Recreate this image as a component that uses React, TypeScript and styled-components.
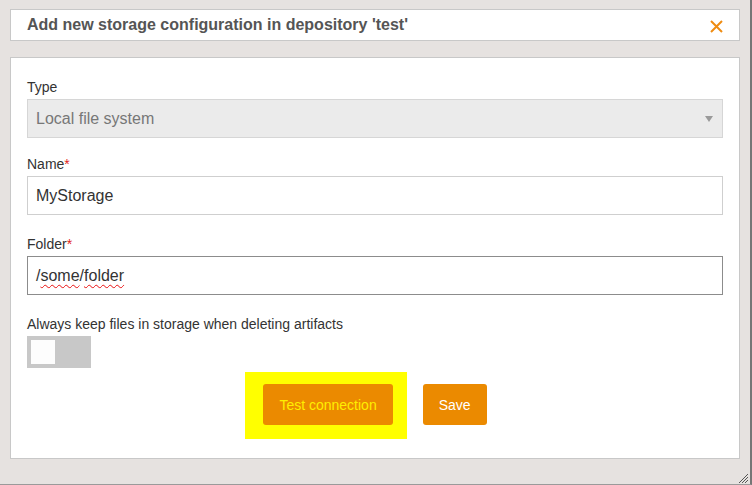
import React from "react";
import styled, { createGlobalStyle } from "styled-components";

const Global = createGlobalStyle`
  html, body { margin: 0; padding: 0; }
  body {
    background: #e6e2e0;
    font-family: "Liberation Sans", Arial, sans-serif;
  }
  * { box-sizing: border-box; }
`;

const Frame = styled.div`
  position: relative;
  width: 752px;
  height: 485px;
  padding: 9px 10px 0 10px;
  border-right: 2px solid #767676;
  border-bottom: 1px solid #9a9a9a;
  background: #e6e2e0;
`;

const Header = styled.div`
  height: 32px;
  width: 730px;
  background: #fff;
  border: 1px solid #c8c8c8;
  display: flex;
  align-items: center;
  justify-content: space-between;
  padding: 0 16px 0 16px;
`;

const Title = styled.h1`
  margin: 0;
  font-size: 16px;
  font-weight: bold;
  color: #555;
  line-height: 20px;
`;

const CloseButton = styled.button`
  border: 0;
  background: transparent;
  padding: 0;
  width: 13px;
  height: 13px;
  display: flex;
  margin-top: 2px;
`;

const Panel = styled.div`
  margin-top: 16px;
  width: 730px;
  height: 402px;
  background: #fff;
  border: 1px solid #c8c8c8;
  padding: 19px 16px 0 16px;
  display: flex;
  flex-direction: column;
`;

const Label = styled.label<{ $gap?: number }>`
  display: block;
  font-size: 14px;
  line-height: 20px;
  color: #333;
  margin-top: ${(p) => p.$gap ?? 0}px;
  margin-bottom: 2px;
`;

const Req = styled.span`
  color: #e2231a;
`;

const SelectBox = styled.div`
  height: 39px;
  background: #ebebeb;
  border: 1px solid #d6d6d6;
  display: flex;
  align-items: center;
  justify-content: space-between;
  padding: 0 9px 0 8px;
  font-size: 16px;
  color: #777;
`;

const Caret = styled.span`
  width: 0;
  height: 0;
  border-left: 4px solid transparent;
  border-right: 4px solid transparent;
  border-top: 6px solid #9a9a9a;
`;

const TextBox = styled.div<{ $focused?: boolean }>`
  height: 39px;
  background: #fff;
  border: 1px solid ${(p) => (p.$focused ? "#8c8c8c" : "#cfcfcf")};
  display: flex;
  align-items: center;
  padding: 0 8px;
  font-size: 16px;
  color: #333;
`;

const Misspelled = styled.span`
  text-decoration: underline wavy #e81010;
  text-decoration-thickness: 1px;
  text-underline-offset: 3px;
`;

const Toggle = styled.div`
  width: 64px;
  height: 32px;
  background: #c8c8c8;
  padding: 4px;
`;

const Knob = styled.div`
  width: 24px;
  height: 24px;
  background: #fdfdfd;
`;

const ButtonRow = styled.div`
  margin-top: 16px;
  display: flex;
  justify-content: center;
  gap: 30px;
`;

const Highlight = styled.div`
  position: relative;
  display: flex;
  &::before {
    content: "";
    position: absolute;
    top: -12px;
    left: -18px;
    right: -14px;
    bottom: -14px;
    background: #ffff00;
  }
`;

const Button = styled.button<{ $textColor: string }>`
  position: relative;
  height: 41px;
  padding: 0 16px;
  border: 0;
  border-radius: 3px;
  background: #eb8a00;
  color: ${(p) => p.$textColor};
  font-family: "Liberation Sans", Arial, sans-serif;
  font-size: 14px;
`;

const Grip = styled.svg`
  position: absolute;
  right: 1px;
  bottom: 0px;
`;

export default function App() {
  return (
    <>
      <Global />
      <Frame>
        <Header>
          <Title>Add new storage configuration in depository 'test'</Title>
          <CloseButton aria-label="close">
            <svg width="13" height="13" viewBox="0 0 13 13">
              <path d="M1 1 L12 12 M12 1 L1 12" stroke="#ef8c12" strokeWidth="2" fill="none" />
            </svg>
          </CloseButton>
        </Header>
        <Panel>
          <Label>Type</Label>
          <SelectBox>
            <span>Local file system</span>
            <Caret />
          </SelectBox>
          <Label $gap={16}>
            Name<Req>*</Req>
          </Label>
          <TextBox>MyStorage</TextBox>
          <Label $gap={19}>
            Folder<Req>*</Req>
          </Label>
          <TextBox $focused>
            <span>
              /<Misspelled>some</Misspelled>/<Misspelled>folder</Misspelled>
            </span>
          </TextBox>
          <Label $gap={19}>Always keep files in storage when deleting artifacts</Label>
          <Toggle>
            <Knob />
          </Toggle>
          <ButtonRow>
            <Highlight>
              <Button $textColor="#ffee00">Test connection</Button>
            </Highlight>
            <Button $textColor="#ffffff">Save</Button>
          </ButtonRow>
        </Panel>
        <Grip width="11" height="11" viewBox="0 0 11 11">
          <path d="M1 10 L10 1 M4 10 L10 4 M7 10 L10 7" stroke="#555" strokeWidth="1" fill="none" />
        </Grip>
      </Frame>
    </>
  );
}
